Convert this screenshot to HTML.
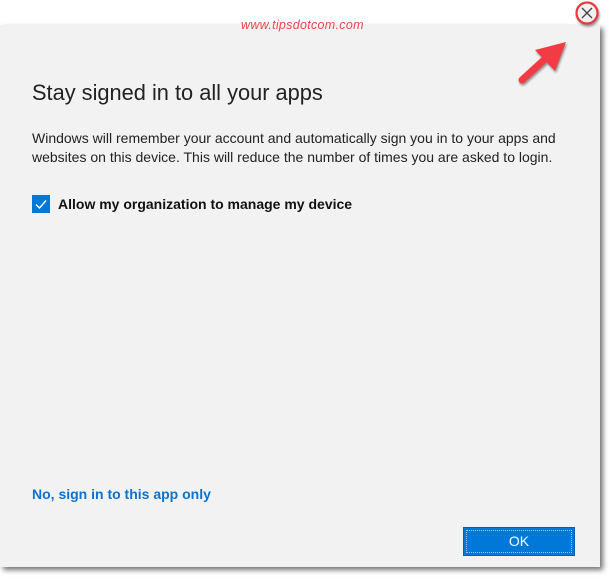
<!DOCTYPE html>
<html><head><style>
html,body{margin:0;padding:0;background:#fff;width:615px;height:583px;overflow:hidden;position:relative;font-family:"Segoe UI","Liberation Sans",sans-serif;}
.dlg{position:absolute;left:0;top:25px;width:600px;height:542px;background:#f2f2f2;box-shadow:3px 3px 5px rgba(0,0,0,0.55);}
.url{position:absolute;left:241px;top:18px;color:#f0464e;font-style:italic;font-size:12.5px;letter-spacing:0.3px;}
h1{position:absolute;left:32px;top:80px;margin:0;font-weight:normal;font-size:21.8px;color:#222;}
.p{position:absolute;left:32px;top:129px;font-size:14px;line-height:19px;color:#222;width:570px;}
.cb{position:absolute;left:32px;top:195px;width:18px;height:18px;background:#0078d7;}
.cbl{position:absolute;left:58px;top:196px;font-size:14px;font-weight:bold;color:#111;}
.link{position:absolute;left:32px;top:486px;font-size:14px;font-weight:bold;color:#0a72d0;}
.ok{position:absolute;left:463px;top:527px;width:112px;height:29px;background:#0078d7;border:1px solid #0561b0;box-sizing:border-box;color:#fff;font-size:14px;text-align:center;line-height:27px;}
.ok:after{content:"";position:absolute;left:2px;top:2px;right:2px;bottom:2px;border:1px dotted #9cc6ee;}
</style></head><body>
<div class="dlg"></div>
<div class="url">www.tipsdotcom.com</div>
<h1>Stay signed in to all your apps</h1>
<div class="p">Windows will remember your account and automatically sign you in to your apps and websites on this device. This will reduce the number of times you are asked to login.</div>
<div class="cb"><svg width="18" height="18"><path d="M4 9.5 L7.5 13 L14 5.5" stroke="#fff" stroke-width="1.4" fill="none"/></svg></div>
<div class="cbl">Allow my organization to manage my device</div>
<div class="link">No, sign in to this app only</div>
<div class="ok">OK</div>
<svg style="position:absolute;left:0;top:0" width="615" height="100">
<circle cx="587" cy="13" r="10.5" fill="#f0f0f0" stroke="#e8383f" stroke-width="2.2" style="filter:drop-shadow(1px 2px 1px rgba(0,0,0,.4))"/>
<path d="M582 8 L592 18 M592 8 L582 18" stroke="#444" stroke-width="1.3"/>
<g style="filter:drop-shadow(1px 2px 1px rgba(0,0,0,.4))">
<path d="M522 80 L545 59" stroke="#f33b44" stroke-width="7" stroke-linecap="round"/>
<path d="M535 50 L566 42 L555 71 Z" fill="#f33b44"/>
</g>
</svg>
</body></html>
